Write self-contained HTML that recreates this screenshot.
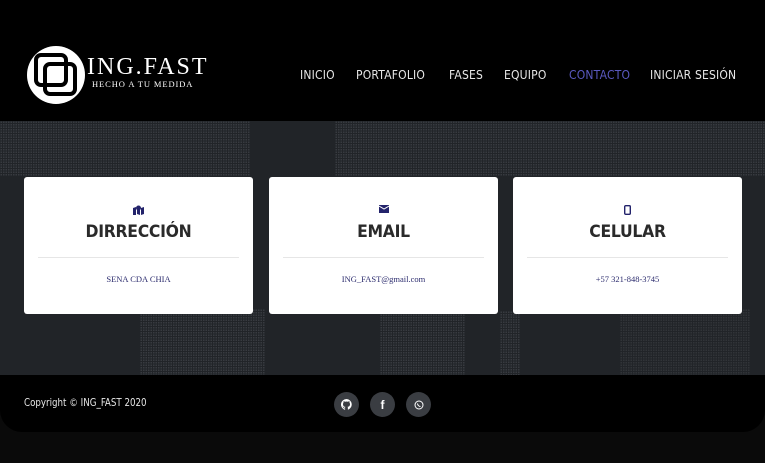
<!DOCTYPE html>
<html><head><meta charset="utf-8"><style>
*{margin:0;padding:0;box-sizing:border-box}
body{width:765px;height:463px;background:#0a0a0a;position:relative;overflow:hidden;font-family:"Liberation Sans",sans-serif}
.hdr{position:absolute;left:0;top:0;width:765px;height:121px;background:#000}
.map{position:absolute;left:0;top:121px;width:765px;height:255px;background:#212428;overflow:hidden}
.d{position:absolute;background-image:radial-gradient(#383b40 0.7px,transparent 0.8px);background-size:2.5px 2.5px}
.ftr{position:absolute;left:0;top:375px;width:765px;height:57px;background:#000;border-radius:0 0 22px 22px}
.nav{position:absolute;top:68px;font-size:12px;letter-spacing:.2px;color:#e6e6e6;font-family:"DejaVu Sans",sans-serif;transform:scaleX(0.9);transform-origin:left}
.card{position:absolute;top:177px;width:229px;height:137px;background:#fff;border-radius:3px;text-align:center}
.ic{position:absolute;top:28px;left:0;width:100%;display:flex;justify-content:center}
.t{position:absolute;top:45px;width:100%;font-family:"DejaVu Sans",sans-serif;font-weight:bold;font-size:17px;color:#2a2a2a;letter-spacing:-0.3px;transform:scaleX(.92)}
.hr{position:absolute;top:80px;left:14px;right:14px;height:1px;background:#e6e6e6}
.v{position:absolute;top:97px;width:100%;font-family:"Liberation Serif",serif;font-size:8.5px;color:#2c2c6e}
.so{position:absolute;top:392px;width:25px;height:25px;border-radius:50%;background:#3a3d42;display:flex;align-items:center;justify-content:center;color:#fff;font-size:12px;font-weight:bold}
</style></head><body>
<div class="hdr"></div>
<div class="map">
<div class="d" style="left:0;top:0;width:250px;height:55px"></div>
<div class="d" style="left:110px;top:0;width:100px;height:60px;background-color:#212428"></div>
<div class="d" style="left:140px;top:188px;width:125px;height:67px"></div>
<div class="d" style="left:335px;top:0;width:430px;height:55px"></div>
<div class="d" style="left:380px;top:188px;width:85px;height:67px"></div>
<div class="d" style="left:620px;top:188px;width:130px;height:67px;opacity:.7"></div>
<div class="d" style="left:500px;top:190px;width:20px;height:65px"></div>
</div>
<div class="ftr"></div>
<svg style="position:absolute;left:27px;top:46px" width="58" height="58" viewBox="0 0 58 58"><circle cx="29" cy="29" r="29" fill="#fff"/><rect x="9" y="9" width="30" height="30" rx="5" fill="none" stroke="#000" stroke-width="4"/><rect x="18" y="18" width="30" height="30" rx="5" fill="none" stroke="#000" stroke-width="4"/></svg>
<div style="position:absolute;left:87px;top:54px;font-family:'Liberation Serif',serif;font-size:24px;color:#fff;letter-spacing:2px">ING.FAST</div>
<div style="position:absolute;left:92px;top:79px;font-family:'Liberation Serif',serif;font-size:8.5px;color:#fff;letter-spacing:.9px">HECHO A TU MEDIDA</div>
<div class="nav" style="left:300px">INICIO</div>
<div class="nav" style="left:356px">PORTAFOLIO</div>
<div class="nav" style="left:449px">FASES</div>
<div class="nav" style="left:504px">EQUIPO</div>
<div class="nav" style="left:569px;color:#5a59c0">CONTACTO</div>
<div class="nav" style="left:650px">INICIAR SESIÓN</div>
<div class="card" style="left:24px"><div class="ic"><svg width="11" height="10" viewBox="0 0 11 10"><path d="M0 3l3-1v8l-3 1zM4 2l3 1v7l-3-1zM8 3l3-1v7l-3 1z" fill="#23236b"/><circle cx="5.5" cy="3" r="2.5" fill="#23236b"/></svg></div><div class="t">DIRRECCIÓN</div><div class="hr"></div><div class="v">SENA CDA CHIA</div></div>
<div class="card" style="left:269px"><div class="ic"><svg width="10" height="8" viewBox="0 0 10 8"><rect width="10" height="8" fill="#23236b"/><path d="M0 1l5 3 5-3" stroke="#fff" fill="none"/></svg></div><div class="t">EMAIL</div><div class="hr"></div><div class="v">ING_FAST@gmail.com</div></div>
<div class="card" style="left:513px"><div class="ic"><svg width="7" height="10" viewBox="0 0 7 10"><rect x=".7" y=".7" width="5.6" height="8.6" rx="1" fill="none" stroke="#23236b" stroke-width="1.4"/></svg></div><div class="t">CELULAR</div><div class="hr"></div><div class="v">+57 321-848-3745</div></div>
<div style="position:absolute;left:24px;top:397px;font-size:10.5px;color:#e6e6e6;font-family:'DejaVu Sans Condensed','DejaVu Sans',sans-serif;transform:scaleX(.92);transform-origin:left">Copyright © ING_FAST 2020</div>
<div class="so" style="left:334px"><svg width="11" height="11" viewBox="0 0 16 16"><path fill="#fff" d="M8 0a8 8 0 00-2.5 15.6c.4 0 .5-.2.5-.4v-1.5c-2.2.5-2.7-1-2.7-1-.4-.9-.9-1.2-.9-1.2-.7-.5.1-.5.1-.5.8.1 1.2.8 1.2.8.7 1.3 1.9.9 2.3.7.1-.5.3-.9.5-1.1-1.8-.2-3.6-.9-3.6-4 0-.9.3-1.6.8-2.1-.1-.2-.4-1 .1-2.1 0 0 .7-.2 2.2.8a7.5 7.5 0 014 0c1.5-1 2.2-.8 2.2-.8.4 1.1.2 1.9.1 2.1.5.6.8 1.3.8 2.1 0 3.1-1.9 3.7-3.6 3.9.3.3.5.8.5 1.5v2.2c0 .2.1.5.6.4A8 8 0 008 0z"/></svg></div>
<div class="so" style="left:370px">f</div>
<div class="so" style="left:406px"><svg width="10" height="10" viewBox="0 0 10 10"><circle cx="5" cy="5" r="4" fill="none" stroke="#fff" stroke-width="1"/><path d="M3.5 3.5c0 1.5 1.5 3 3 3" stroke="#fff" fill="none"/></svg></div>
</body></html>
